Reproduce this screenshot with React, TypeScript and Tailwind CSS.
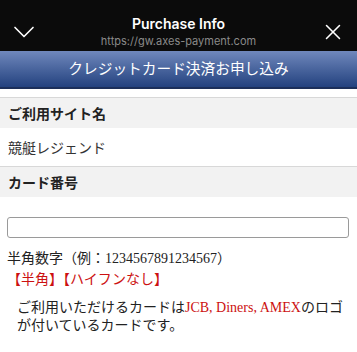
import { ChevronDown, X } from "lucide-react";

const serif = "font-['Liberation_Serif','Noto_Sans_CJK_JP',serif]";

const SectionHead = ({ children }: { children: React.ReactNode }) => (
    <div className="h-[30px] bg-[#f2f2f2] flex items-center px-[8px] pt-[2px] text-[14px] font-bold text-[#222]">
        {children}
    </div>
)

const App = () => {
    return (
        <div className={`w-[357px] h-[352px] overflow-hidden bg-white ${serif}`}>
            {/* browser sheet header */}
            <div className="relative h-[51px] bg-[#0b0b0b]">
                <ChevronDown className="absolute left-[6px] top-[14px] w-[36px] h-[36px] text-white" strokeWidth={1.1} />
                <div className="flex flex-col items-center font-['Inter','Liberation_Sans',sans-serif] pt-[15px]">
                    <div className="text-[14px] font-semibold text-white leading-[18px]">Purchase Info</div>
                    <div className="text-[11px] text-[#8a8a8a] leading-[14px] mt-[1px]">https://gw.axes-payment.com</div>
                </div>
                <X className="absolute right-[11px] top-[19px] w-[26px] h-[26px] text-white" strokeWidth={1.4} />
            </div>

            {/* page title bar */}
            <div className="h-[38px] bg-gradient-to-b from-[#7088bc] to-[#24427f] border-b-[2px] border-[#1c2f5a] flex items-center justify-center">
                <span className="text-[14.7px] text-white">クレジットカード決済お申し込み</span>
            </div>

            <div className="h-[8px]" />
            <div className="border-t border-[#d8d8d8]" />

            <SectionHead>ご利用サイト名</SectionHead>
            <div className="h-[39px] flex items-center px-[8px] pt-[3px] text-[14px] text-[#333] border-b border-[#d8d8d8]">
                競艇レジェンド
            </div>

            <SectionHead>カード番号</SectionHead>

            <div className="px-[7px] pt-[20px]">
                <input
                    type="text"
                    className="block w-[342px] h-[21px] border border-[#9a9a9a] rounded-[3px] bg-white"
                />
                <div className="mt-[12px] text-[14px] text-[#222] leading-[18px]">半角数字（例：1234567891234567）</div>
                <div className="text-[14px] text-[#cc1111] leading-[18px] mt-[3px]">【半角】【ハイフンなし】</div>
                <p className="mt-[10px] pl-[10px] text-[14px] text-[#222] leading-[18px]">
                    ご利用いただけるカードは<span className="text-[#cc1111]">JCB, Diners, AMEX</span>のロゴが付いているカードです。
                </p>
            </div>
        </div>
    )
}

export default App
